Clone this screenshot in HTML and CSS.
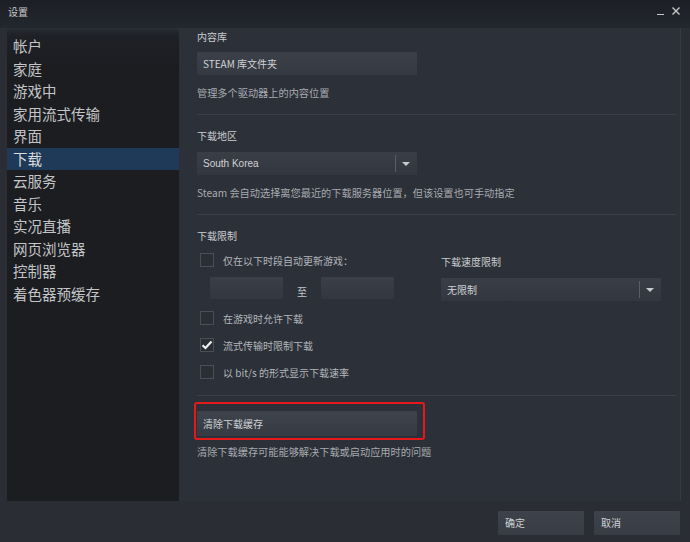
FILE: index.html
```html
<!DOCTYPE html>
<html lang="zh-CN">
<head>
<meta charset="utf-8">
<title>设置</title>
<link rel="stylesheet" href="styles.css">
</head>
<body>
<div class="window">
  <div class="titlebar">
    <span class="title">设置</span>
    <div class="controls">
      <span class="min"></span>
      <svg class="close" width="8" height="8" viewBox="0 0 8 8"><path d="M0.5 0.5 L7.5 7.5 M7.5 0.5 L0.5 7.5" stroke="#c8c8c8" stroke-width="1.4"/></svg>
    </div>
  </div>
  <div class="main">
    <nav class="sidebar">
      <div class="nav-item">帐户</div>
      <div class="nav-item">家庭</div>
      <div class="nav-item">游戏中</div>
      <div class="nav-item">家用流式传输</div>
      <div class="nav-item">界面</div>
      <div class="nav-item active">下载</div>
      <div class="nav-item">云服务</div>
      <div class="nav-item">音乐</div>
      <div class="nav-item">实况直播</div>
      <div class="nav-item">网页浏览器</div>
      <div class="nav-item">控制器</div>
      <div class="nav-item">着色器预缓存</div>
    </nav>
    <section class="content">
      <div class="section">
        <div class="label">内容库</div>
        <div class="btn wide">STEAM 库文件夹</div>
        <div class="desc">管理多个驱动器上的内容位置</div>
      </div>
      <div class="sep"></div>
      <div class="section">
        <div class="label">下载地区</div>
        <div class="select wide"><span class="sel-text">South Korea</span><span class="sel-div"></span><span class="arrow"></span></div>
        <div class="desc">Steam 会自动选择离您最近的下载服务器位置，但该设置也可手动指定</div>
      </div>
      <div class="sep"></div>
      <div class="section limits">
        <div class="label">下载限制</div>
        <div class="limit-row">
          <div class="limit-left">
            <div class="check-row first"><span class="box"></span><span>仅在以下时段自动更新游戏：</span></div>
            <div class="time-row">
              <span class="time"></span>
              <span class="to">至</span>
              <span class="time"></span>
            </div>
          </div>
          <div class="limit-right">
            <div class="label speed">下载速度限制</div>
            <div class="select wide"><span class="sel-text">无限制</span><span class="sel-div"></span><span class="arrow"></span></div>
          </div>
        </div>
        <div class="check-row after"><span class="box"></span><span>在游戏时允许下载</span></div>
        <div class="check-row"><span class="box checked"><svg width="12" height="10" viewBox="0 0 12 10"><path d="M1.5 5.2 L4.5 8 L10.5 1.5" fill="none" stroke="#f0f0f0" stroke-width="2.2"/></svg></span><span>流式传输时限制下载</span></div>
        <div class="check-row"><span class="box"></span><span>以 bit/s 的形式显示下载速率</span></div>
      </div>
      <div class="sep last"></div>
      <div class="section cache">
        <div class="highlight">
          <div class="btn wide tall">清除下载缓存</div>
        </div>
        <div class="desc">清除下载缓存可能能够解决下载或启动应用时的问题</div>
      </div>
    </section>
  </div>
  <div class="footer">
    <div class="btn foot">确定</div>
    <div class="btn foot">取消</div>
  </div>
</div>
</body>
</html>
```

FILE: styles.css
```css
* { box-sizing: border-box; }
html, body { margin: 0; padding: 0; }
body {
  width: 690px;
  height: 542px;
  overflow: hidden;
  background: #2a2d33;
  font-family: "Noto Sans CJK SC", "Liberation Sans", sans-serif;
  color: #b8bcc2;
}
.window { width: 690px; height: 542px; display: flex; flex-direction: column; }

.titlebar {
  height: 28px;
  flex: none;
  display: flex;
  align-items: center;
  justify-content: space-between;
  padding: 0 10px 0 8px;
  background: linear-gradient(#1c1f25, #23272e);
}
.title { font-size: 10px; color: #c8c8c8; line-height: 1; margin-top: -4px; }
.controls { display: flex; align-items: flex-end; gap: 8px; margin-top: -6px; }
.min { width: 7px; height: 1.5px; background: #c8c8c8; }
.close { display: block; }

.main {
  height: 473px;
  flex: none;
  display: flex;
  margin-left: 7px;
}
.sidebar {
  width: 172px;
  flex: none;
  background: linear-gradient(#2a2e36 0px, #22252b 4px, #1e2025 9px, #1b1d21 40px, #1b1d21);
  padding-top: 7px;
}
.nav-item {
  height: 22.5px;
  line-height: 22.5px;
  padding-left: 6px;
  font-size: 14.5px;
  color: #c3c5c8;
  white-space: nowrap;
}
.nav-item.active { background: #1f3a58; color: #d8dadc; }

.content {
  flex: 1;
  background: #2c3038;
  border-right: 1px solid #363a42;
  margin-right: 9px;
  padding: 0 4px 0 18px;
  display: flex;
  flex-direction: column;
}
.section { display: flex; flex-direction: column; }
.label { font-size: 10px; line-height: 14px; color: #cbcdd0; margin-top: 2px; }
.desc { font-size: 10.2px; line-height: 14px; color: #a7abb0; margin-top: 11px; white-space: nowrap; }
.sep { height: 1px; background: #3b4048; margin: 14px 0 12px 0; }
.sep.last { margin: 16px 0 6px 0; }

.btn {
  height: 23px;
  background: linear-gradient(#3b4049, #353a42);
  color: #d0d2d5;
  font-size: 10px;
  line-height: 23px;
  padding-left: 6px;
  border-radius: 1px;
  white-space: nowrap;
}
.wide { width: 220px; }
.section > .btn.wide { margin-top: 8px; }
.btn.tall { height: 25px; line-height: 25px; background: linear-gradient(#3e434c, #363b43); }

.select {
  height: 23px;
  margin-top: 9px;
  background: linear-gradient(#393e47, #33373f);
  display: flex;
  align-items: center;
  border-radius: 1px;
}
.sel-text { flex: 1; padding-left: 6px; font-size: 10px; color: #d0d2d5; font-family: "Liberation Sans", "Noto Sans CJK SC", sans-serif; }
.sel-div { width: 1px; height: 17px; background: #5a5f67; }
.arrow {
  width: 0; height: 0;
  border-left: 4px solid transparent;
  border-right: 4px solid transparent;
  border-top: 4px solid #c8cacd;
  margin: 0 7px 0 6px;
}

.limit-row { display: flex; }
.limit-left { width: 244px; }
.limit-right { display: flex; flex-direction: column; }
.label.speed { margin-top: 12px; }
.limit-right .select { margin-top: 9px; }

.check-row {
  display: flex;
  align-items: center;
  gap: 9px;
  font-size: 10px;
  color: #b3b7bc;
  margin-top: 13px;
  padding-left: 3px;
  height: 14px;
  white-space: nowrap;
}
.check-row.first { margin-top: 10px; }
.check-row.after { margin-top: 10px; }
.box {
  width: 14px; height: 14px;
  border: 1px solid #4a4f57;
  background: #2a2e35;
  display: flex; align-items: center; justify-content: center;
  flex: none;
}
.box svg { display: block; }

.time-row { display: flex; align-items: center; margin-top: 10px; padding-left: 13px; }
.time { width: 73px; height: 22px; background: linear-gradient(#3a3f48, #33373f); border-radius: 1px; }
.to { width: 38px; text-align: center; font-size: 10px; color: #c3c5c8; padding-top: 6px; }

.highlight {
  width: 231px;
  height: 38px;
  margin-left: -3px;
  border: 2px solid #e5191c;
  border-radius: 3px;
  padding: 7px 0 0 1px;
}
.cache .desc { margin-top: 5px; }

.footer {
  flex: 1;
  display: flex;
  justify-content: flex-end;
  gap: 10px;
  padding: 10px 10px 0 0;
}
.btn.foot { width: 86px; height: 24px; line-height: 24px; padding-left: 7px; background: linear-gradient(#3d424b, #383c44); }
```
